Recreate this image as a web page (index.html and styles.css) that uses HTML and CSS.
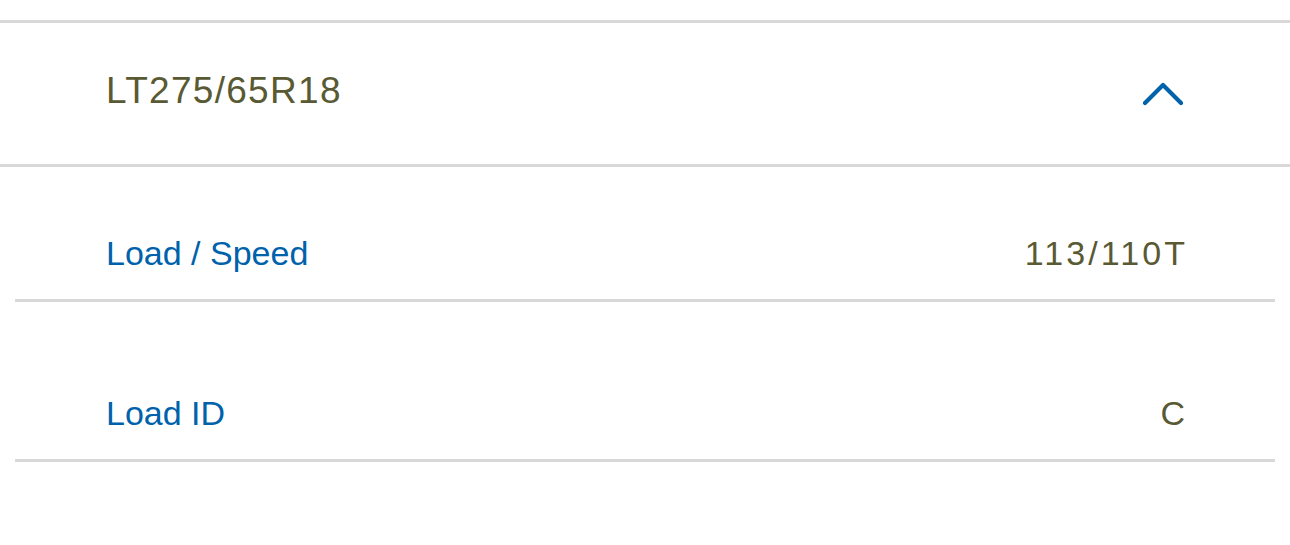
FILE: index.html
```html
<!DOCTYPE html>
<html lang="en">
<head>
<meta charset="utf-8">
<title>Tire size</title>
<link rel="stylesheet" href="styles.css">
</head>
<body>
<section class="accordion">
  <div class="acc-header">
    <h2 class="acc-title">LT275/65R18</h2>
    <svg class="chevron" width="40" height="24" viewBox="0 0 40 24" aria-hidden="true">
      <polyline points="2,21 20,3 38,21" fill="none" stroke="#0062ab" stroke-width="4.2" stroke-linecap="round" stroke-linejoin="round"/>
    </svg>
  </div>
  <div class="acc-body">
    <div class="spec-row">
      <span class="spec-label">Load / Speed</span>
      <span class="spec-value">113/110T</span>
    </div>
    <div class="spec-row">
      <span class="spec-label">Load ID</span>
      <span class="spec-value">C</span>
    </div>
  </div>
</section>
</body>
</html>
```

FILE: styles.css
```css
html, body {
  margin: 0;
  padding: 0;
  background: #ffffff;
}

body {
  font-family: "Liberation Sans", Arial, sans-serif;
  padding-top: 20px;
}

.accordion {
  border-top: 3px solid #d8d8d8;
}

.acc-header {
  display: flex;
  justify-content: space-between;
  align-items: center;
  padding: 46px 107px 51px 106px;
  border-bottom: 3px solid #d8d8d8;
}

.acc-title {
  margin: 0;
  font-size: 37px;
  line-height: 44px;
  font-weight: normal;
  letter-spacing: 1.3px;
  color: #595933;
}

.chevron {
  display: block;
  margin-top: 5px;
}

.acc-body {
  margin: 0 15px;
}

.spec-row {
  display: flex;
  justify-content: space-between;
  align-items: baseline;
  padding: 66px 90px 26px 91px;
  border-bottom: 3px solid #d8d8d8;
  font-size: 34px;
  line-height: 40px;
}

.spec-row + .spec-row {
  margin-top: 25px;
}

.spec-label {
  color: #0062ab;
}

.spec-value {
  color: #595933;
  letter-spacing: 3.1px;
  margin-right: -3.1px;
}
```
